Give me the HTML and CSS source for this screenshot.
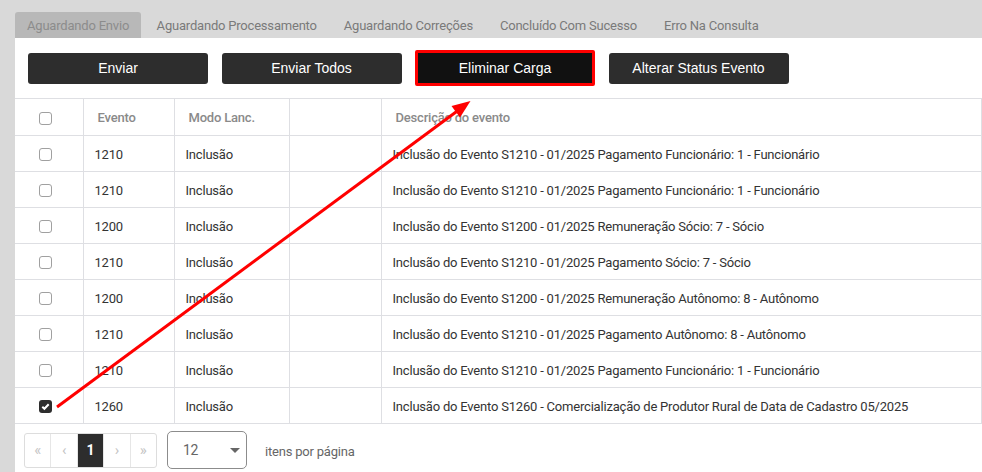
FILE: index.html
```html
<!DOCTYPE html>
<html>
<head>
    <meta charset="utf-8">
    <title>Eventos - Aguardando Envio</title>
    <link rel="stylesheet" href="styles.css">
</head>
<body>
    <div class="page">
        <ul class="tabs">
            <li class="tab active">Aguardando Envio</li>
            <li class="tab">Aguardando Processamento</li>
            <li class="tab">Aguardando Correções</li>
            <li class="tab">Concluído Com Sucesso</li>
            <li class="tab">Erro Na Consulta</li>
        </ul>

        <div class="panel">
            <div class="toolbar">
                <button class="btn">Enviar</button>
                <button class="btn">Enviar Todos</button>
                <button class="btn btn-marked">Eliminar Carga</button>
                <button class="btn">Alterar Status Evento</button>
            </div>

            <table class="grid">
                <colgroup>
                    <col class="col-check">
                    <col class="col-evento">
                    <col class="col-modo">
                    <col class="col-blank">
                    <col>
                </colgroup>
                <thead>
                    <tr>
                        <th class="cell-check"><span class="check"></span></th>
                        <th>Evento</th>
                        <th>Modo Lanc.</th>
                        <th></th>
                        <th>Descrição do evento</th>
                    </tr>
                </thead>
                <tbody>
                    <tr>
                        <td class="cell-check"><span class="check"></span></td>
                        <td>1210</td>
                        <td>Inclusão</td>
                        <td></td>
                        <td>Inclusão do Evento S1210 - 01/2025 Pagamento Funcionário: 1 - Funcionário</td>
                    </tr>
                    <tr>
                        <td class="cell-check"><span class="check"></span></td>
                        <td>1210</td>
                        <td>Inclusão</td>
                        <td></td>
                        <td>Inclusão do Evento S1210 - 01/2025 Pagamento Funcionário: 1 - Funcionário</td>
                    </tr>
                    <tr>
                        <td class="cell-check"><span class="check"></span></td>
                        <td>1200</td>
                        <td>Inclusão</td>
                        <td></td>
                        <td>Inclusão do Evento S1200 - 01/2025 Remuneração Sócio: 7 - Sócio</td>
                    </tr>
                    <tr>
                        <td class="cell-check"><span class="check"></span></td>
                        <td>1210</td>
                        <td>Inclusão</td>
                        <td></td>
                        <td>Inclusão do Evento S1210 - 01/2025 Pagamento Sócio: 7 - Sócio</td>
                    </tr>
                    <tr>
                        <td class="cell-check"><span class="check"></span></td>
                        <td>1200</td>
                        <td>Inclusão</td>
                        <td></td>
                        <td>Inclusão do Evento S1200 - 01/2025 Remuneração Autônomo: 8 - Autônomo</td>
                    </tr>
                    <tr>
                        <td class="cell-check"><span class="check"></span></td>
                        <td>1210</td>
                        <td>Inclusão</td>
                        <td></td>
                        <td>Inclusão do Evento S1210 - 01/2025 Pagamento Autônomo: 8 - Autônomo</td>
                    </tr>
                    <tr>
                        <td class="cell-check"><span class="check"></span></td>
                        <td>1210</td>
                        <td>Inclusão</td>
                        <td></td>
                        <td>Inclusão do Evento S1210 - 01/2025 Pagamento Funcionário: 1 - Funcionário</td>
                    </tr>
                    <tr>
                        <td class="cell-check">
                            <span class="check checked">
                                <svg width="13" height="13" viewBox="0 0 13 13"><path d="M3.3 6.8 L5.4 8.8 L9.7 4.3" fill="none" stroke="#fff" stroke-width="2"/></svg>
                            </span>
                        </td>
                        <td>1260</td>
                        <td>Inclusão</td>
                        <td></td>
                        <td>Inclusão do Evento S1260 - Comercialização de Produtor Rural de Data de Cadastro 05/2025</td>
                    </tr>
                </tbody>
            </table>

            <div class="pager-bar">
                <div class="pager">
                    <span class="pg disabled">&laquo;</span>
                    <span class="pg disabled">&lsaquo;</span>
                    <span class="pg current">1</span>
                    <span class="pg disabled">&rsaquo;</span>
                    <span class="pg disabled">&raquo;</span>
                </div>
                <div class="page-size">
                    <span>12</span>
                    <span class="caret"></span>
                </div>
                <span class="pager-info">itens por página</span>
            </div>
        </div>

        <!-- annotation arrow pointing at the button -->
        <svg class="annotation" width="982" height="472" viewBox="0 0 982 472">
            <line x1="57" y1="407" x2="458" y2="110.5" stroke="#f00" stroke-width="3"/>
            <polygon points="470.5,101 460,117.5 451.5,106" fill="#f00"/>
        </svg>
    </div>
</body>
</html>
```

FILE: styles.css
```css
body {
    margin: 0;
    background-color: #d9d9d9;
    font-family: Roboto, "Liberation Sans", Arial, sans-serif;
    font-size: 13px;
    letter-spacing: -0.2px;
    color: #333;
}

.page {
    position: relative;
    width: 982px;
    height: 472px;
    overflow: hidden;
    padding: 12px 0 0 15px;
    box-sizing: border-box;
}

.tabs {
    display: flex;
    list-style: none;
    margin: 0;
    padding: 0;
}

.tab {
    height: 26px;
    line-height: 27px;
    padding: 0 13.5px;
    color: #7a7a7a;
    border-radius: 3px 3px 0 0;
}

.tab.active {
    padding: 0 12px;
    margin-right: 2px;
    background-color: #b8b8b8;
    color: #8c8c8c;
}

.panel {
    background-color: #fff;
    height: 434px;
}

.toolbar {
    display: flex;
    align-items: center;
    gap: 13.5px;
    height: 60px;
    padding: 0 13px;
}

.btn {
    width: 180px;
    height: 31px;
    background-color: #2d2d2d;
    color: #fff;
    border: none;
    border-radius: 3px;
    font-family: "Liberation Sans", Arial, sans-serif;
    font-size: 14px;
    letter-spacing: 0;
    cursor: pointer;
}

.btn-marked {
    height: 36px;
    background-color: #111;
    border: 3px solid #f00;
    border-radius: 2px;
}

.grid {
    width: 967px;
    border-collapse: collapse;
    table-layout: fixed;
}

.col-check { width: 68px; }
.col-evento { width: 91px; }
.col-modo { width: 115px; }
.col-blank { width: 92px; }

.grid th,
.grid td {
    border: 1px solid #dedfe3;
    text-align: left;
    white-space: nowrap;
    padding: 0 11px;
}

.grid th:first-child,
.grid td:first-child {
    border-left: none;
}

.grid th {
    height: 36px;
    color: #8a8a8a;
    font-weight: 500;
    padding-left: 14px;
}

.grid td {
    height: 34px;
    padding-top: 1px;
}

.grid .cell-check {
    padding: 0 0 0 24px;
}

.check {
    display: inline-block;
    width: 11px;
    height: 11px;
    border: 1px solid #a0a0a0;
    border-radius: 3px;
    vertical-align: middle;
    background-color: #fff;
}

.check.checked {
    width: 13px;
    height: 13px;
    border: none;
    background-color: #2d2d2d;
}

.check svg {
    display: block;
}

.pager-bar {
    display: flex;
    align-items: center;
    padding: 7px 0 0 9px;
}

.pager {
    display: flex;
    height: 33px;
    margin-right: 10px;
    border: 1px solid #dddddd;
    border-radius: 3px;
    overflow: hidden;
}

.pg {
    width: 25.4px;
    line-height: 33px;
    text-align: center;
    border-left: 1px solid #e6e6e6;
    font-size: 15px;
}

.pg:first-child {
    border-left: none;
}

.pg.disabled {
    color: #c4c4c4;
}

.pg.current {
    background-color: #2d2d2d;
    color: #fff;
    font-weight: bold;
    font-size: 14px;
}

.page-size {
    display: flex;
    align-items: center;
    justify-content: space-between;
    width: 80px;
    height: 38px;
    box-sizing: border-box;
    margin-right: 18px;
    padding: 0 6px 0 15px;
    border: 1px solid #8c8c8c;
    border-radius: 5px;
    color: #666;
    font-size: 14px;
}

.caret {
    width: 0;
    height: 0;
    border-left: 5px solid transparent;
    border-right: 5px solid transparent;
    border-top: 5px solid #666;
}

.pager-info {
    color: #666;
    padding-top: 2px;
}

.annotation {
    position: absolute;
    top: 0;
    left: 0;
    pointer-events: none;
}
```
